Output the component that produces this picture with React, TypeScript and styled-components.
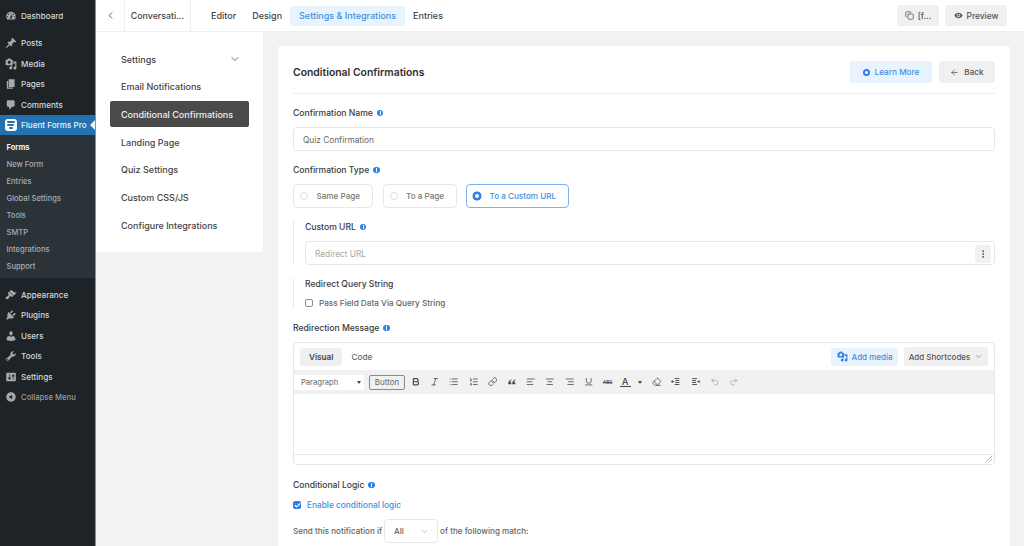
import React from "react";
import styled, { createGlobalStyle } from "styled-components";
import {
  Bold, Italic, List, ListOrdered, Link, AlignLeft, AlignCenter, AlignRight, Underline,
  Eraser, Undo2, Redo2, ChevronDown, ChevronLeft, Copy,
  ArrowLeft, Check, MoreVertical,
} from "lucide-react";

const Global = createGlobalStyle`
  html, body { margin: 0; padding: 0; height: 546px; overflow: hidden; background: #f2f2f2; }
  body { font-family: Inter, "Liberation Sans", sans-serif; -webkit-font-smoothing: antialiased; }
  * { box-sizing: border-box; }
`;

const Shell = styled.div`display: flex; width: 1024px; height: 546px; overflow: hidden;`;

const Side = styled.nav`
  width: 96px; flex: none; background: #1d2327; border-right: 1px solid #8a8f94;
  padding-top: 6px; color: #d5d8da; display: flex; flex-direction: column;
`;
const SideItem = styled.div<{ $mt?: number; $dim?: boolean }>`
  height: 20.5px; margin-top: ${p => p.$mt ?? 0}px; display: flex; align-items: center;
  gap: 4.5px; padding-left: 4.5px; font-size: ${p => (p.$dim ? 7.7 : 8.1)}px; font-weight: 500;
  color: ${p => (p.$dim ? "#9a9ea2" : "#d5d8da")}; white-space: nowrap;
  svg { width: 12px; height: 12px; fill: #a7aaad; flex: none; }
`;
const SideActive = styled.div`
  height: 20px; background: #2271b1; display: flex; align-items: center; gap: 4.5px;
  padding-left: 4.5px; font-size: 8.1px; font-weight: 500; color: #eef3f7; white-space: nowrap; position: relative;
  &::after {
    content: ""; position: absolute; right: 0; top: 5px; border: 5px solid transparent;
    border-right-color: #f2f2f2; border-left-width: 0;
  }
`;
const FluentLogo = styled.span`
  width: 12px; height: 12px; border-radius: 3px; background: #fff; display: flex; flex-direction: column;
  align-items: center; justify-content: center; gap: 1.5px; flex: none;
  i { display: block; height: 1.8px; background: #2271b1; border-radius: 1px; }
  i:nth-child(1) { width: 8px; } i:nth-child(2) { width: 7px; } i:nth-child(3) { width: 4px; }
`;
const Sub = styled.div`
  background: #2c3338; height: 143px; padding-top: 4px; display: flex; flex-direction: column;
`;
const SubItem = styled.div<{ $on?: boolean }>`
  height: 17px; display: flex; align-items: center; padding-left: 6.5px; font-size: 7.55px;
  font-weight: ${p => (p.$on ? 700 : 500)}; color: ${p => (p.$on ? "#f0f0f1" : "#a9adb1")}; white-space: nowrap;
`;

const Content = styled.div`flex: 1; min-width: 0; display: flex; flex-direction: column;`;
const TopBar = styled.header`
  height: 32px; flex: none; background: #fff; border-bottom: 1px solid #eceef0;
  display: flex; align-items: stretch; color: #444;
`;
const BackCell = styled.div`
  width: 29px; display: flex; align-items: center; justify-content: center; border-right: 1px solid #eceef0;
  svg { width: 11px; height: 11px; color: #555; }
`;
const TitleCell = styled.div`
  width: 66px; border-right: 1px solid #eceef0; display: flex; align-items: center; justify-content: center;
  font-size: 8.8px; font-weight: 500; color: #444; white-space: nowrap;
`;
const Tabs = styled.div`display: flex; align-items: center; margin-left: 12px;`;
const Tab = styled.div<{ $on?: boolean }>`
  height: 20px; padding: 0 ${p => (p.$on ? 9 : 8)}px; display: flex; align-items: center; font-size: 9px; font-weight: 500;
  border-radius: 3px; white-space: nowrap;
  color: ${p => (p.$on ? "#3f8fe0" : "#444")}; background: ${p => (p.$on ? "#e9f3fd" : "transparent")};
`;
const TopRight = styled.div`margin-left: auto; display: flex; align-items: center; gap: 6px; padding-right: 17px;`;
const GreyBtn = styled.div<{ $w: number }>`
  width: ${p => p.$w}px; height: 21px; background: #f0f0f0; border-radius: 3px; display: flex; align-items: center;
  justify-content: center; gap: 4px; font-size: 8.4px; font-weight: 500; color: #555;
  svg { width: 9px; height: 9px; }
`;

const Body = styled.div`flex: 1; min-height: 0; display: flex; align-items: flex-start; gap: 15px;`;
const Menu = styled.aside`
  width: 167px; flex: none; height: 220px; background: #fff; padding: 14px 14px 0; display: flex; flex-direction: column;
`;
const MenuItem = styled.div<{ $on?: boolean }>`
  height: 26px; margin-bottom: 1.7px; padding: 0 11px; border-radius: 2px; display: flex; align-items: center;
  justify-content: space-between; font-size: 9px; font-weight: 500; white-space: nowrap;
  background: ${p => (p.$on ? "#4a4a4a" : "transparent")}; color: ${p => (p.$on ? "#f0f0f0" : "#444")};
  svg { width: 12px; height: 12px; color: #666; margin-right: -3px; }
`;
const Card = styled.main`
  width: 732px; flex: none; margin-top: 14px; background: #fff; border-radius: 3px 3px 0 0; padding: 15px 15px 0; height: 520px;
  display: flex; flex-direction: column;
`;
const CardHead = styled.div`
  height: 33px; flex: none; border-bottom: 1px solid #eceef0; display: flex; align-items: flex-start; justify-content: space-between; padding-bottom: 10px;
`;
const CardTitle = styled.h1`margin: 4.5px 0 0; font-size: 10.4px; font-weight: 600; color: #303030; white-space: nowrap;`;
const HeadBtns = styled.div`display: flex; gap: 7px;`;
const HeadBtn = styled.div<{ $w: number; $blue?: boolean }>`
  width: ${p => p.$w}px; height: 22px; border-radius: 3px; display: flex; align-items: center; justify-content: center; gap: 5px;
  font-size: 8.2px; font-weight: 500; white-space: nowrap;
  background: ${p => (p.$blue ? "#e8f3fe" : "#f0f0f0")}; color: ${p => (p.$blue ? "#3f8fe0" : "#555")};
  svg { width: 9px; height: 9px; }
`;
const RingDot = styled.span`
  width: 7px; height: 7px; border-radius: 50%; background: #fff; border: 2.2px solid #2f80e8; flex: none;
`;
const Label = styled.div<{ $mt: number }>`
  margin-top: ${p => p.$mt}px; height: 12px; display: flex; align-items: center; gap: 4px;
  font-size: 8.6px; font-weight: 500; color: #3a3a3a; white-space: nowrap;
`;
const InfoDot = styled.span`
  width: 6.5px; height: 6.5px; border-radius: 50%; background: #2f80e8; flex: none; position: relative;
  &::after { content: ""; position: absolute; left: 2.75px; top: 1.5px; width: 1px; height: 3.5px; background: #fff; }
`;
const TextField = styled.div<{ $mt: number; $muted?: boolean }>`
  margin-top: ${p => p.$mt}px; height: 24px; border: 1px solid #e5e7ea; border-radius: 4px; padding: 1px 9px 0;
  display: flex; align-items: center; justify-content: space-between; font-size: 8.3px;
  color: ${p => (p.$muted ? "#a8a8a8" : "#666")}; background: #fff;
`;
const KebabBtn = styled.span`
  width: 16px; height: 18px; margin-right: -6px; background: #f0f0f0; border-radius: 3px; display: flex; align-items: center; justify-content: center;
  svg { width: 10px; height: 10px; color: #444; }
`;
const Radios = styled.div`margin-top: 8px; display: flex; gap: 9.5px;`;
const Radio = styled.div<{ $w: number; $on?: boolean }>`
  width: ${p => p.$w}px; height: 24px; border-radius: 4px; padding-left: 6px; display: flex; align-items: center; gap: 8.5px;
  font-size: 8.15px; font-weight: 500; white-space: nowrap;
  border: 1px solid ${p => (p.$on ? "#7fb2ea" : "#e7e8ea")}; color: ${p => (p.$on ? "#3f8fe0" : "#777")};
`;
const RadioDot = styled.span<{ $on?: boolean }>`
  width: 8px; height: 8px; border-radius: 50%; flex: none;
  ${p => p.$on ? "background: #fff; border: 2.5px solid #2f80e8; box-shadow: 0 0 0 .5px #2f80e8;" : "border: 1px solid #dedede;"}
`;
const Group = styled.section<{ $mt: number; $h: number }>`
  margin-top: ${p => p.$mt}px; height: ${p => p.$h}px; border-left: 1px solid #e9eaec; padding-left: 11px;
`;
const CheckLine = styled.div`
  margin-top: 8px; display: flex; align-items: center; gap: 6px; font-size: 8.2px; font-weight: 500; color: #666; white-space: nowrap;
`;
const CheckBox = styled.span`width: 8px; height: 8px; border: 1px solid #8e8e8e; border-radius: 2px; flex: none;`;
const Editor = styled.div`
  margin-top: 8px; height: 123px; border: 1px solid #e5e7ea; border-radius: 4px; flex: none; display: flex; flex-direction: column; background: #fff;
`;
const EdTop = styled.div`height: 27px; flex: none; display: flex; align-items: center; padding: 0 6px;`;
const EdMode = styled.div<{ $on?: boolean }>`
  height: 18px; padding: 0 9px; display: flex; align-items: center; border-radius: 3px; font-size: 8.2px;
  font-weight: ${p => (p.$on ? 600 : 500)}; background: ${p => (p.$on ? "#f0f0f0" : "transparent")}; color: ${p => (p.$on ? "#444" : "#666")};
`;
const EdSpacer = styled.div`flex: 1;`;
const AddMedia = styled.div`
  width: 67px; height: 18px; border-radius: 3px; background: #e8f3fe; color: #3f8fe0; font-size: 8px; font-weight: 500;
  display: flex; align-items: center; justify-content: center; gap: 4px; white-space: nowrap; margin-right: 6px;
  svg { width: 11px; height: 11px; fill: #2f80e8; }
`;
const Shortcodes = styled.div`
  width: 84px; height: 19px; border-radius: 3px; background: #f0f0f0; color: #555; font-size: 8px; font-weight: 500;
  display: flex; align-items: center; justify-content: center; gap: 4px; white-space: nowrap;
  svg { width: 9px; height: 9px; color: #888; }
`;
const Toolbar = styled.div`
  height: 24px; flex: none; background: #f1f1f1; display: flex; align-items: center;
  svg { width: 9.5px; height: 9.5px; color: #4a4a4a; flex: none; }
`;
const Para = styled.div`
  width: 70px; height: 15px; background: #fff; display: flex; align-items: center; justify-content: space-between;
  padding: 0 3px 0 7px; font-size: 7.6px; color: #666; flex: none;
`;
const Caret = styled.span`
  width: 0; height: 0; border: 2.2px solid transparent; border-top: 3px solid #444; border-bottom: 0; flex: none;
`;
const TinyBtn = styled.div`
  margin-left: 5px; width: 36px; height: 15px; border: 1px solid #8a8a8a; border-radius: 2px; display: flex; align-items: center; justify-content: center;
  font-size: 8px; color: #666; flex: none;
`;
const Tools = styled.div`display: flex; align-items: center; gap: 9.7px; margin-left: 6px;`;
const Abc = styled.span`font-size: 4.5px; font-weight: 600; color: #555; text-decoration: line-through; width: 10px;`;
const ColorTool = styled.span`display: flex; align-items: center; gap: 7px; margin: 0 1px 0 -3px;`;
const ColorA = styled.span`font-size: 9.5px; color: #444; font-weight: 500; border-bottom: 1.5px solid #444; line-height: 9px; width: 11px; text-align: center;`;
const Muted = styled.span`display: flex; svg { color: #aaa; }`;
const EdBody = styled.div`flex: 1;`;
const EdStatus = styled.div`
  height: 10px; flex: none; border-top: 1px solid #e5e7ea; display: flex; justify-content: flex-end; align-items: flex-end; padding: 0 2px 2px;
  svg { width: 6px; height: 6px; stroke: #999; }
`;
const BlueCheck = styled.div`
  margin-top: 9px; display: flex; align-items: center; gap: 6px; font-size: 8.3px; font-weight: 500; color: #3f8fe0; white-space: nowrap;
`;
const CheckedBox = styled.span`
  width: 8px; height: 8px; background: #2f80e8; border-radius: 2px; display: flex; align-items: center; justify-content: center; flex: none;
  svg { width: 7px; height: 7px; color: #fff; }
`;
const SendLine = styled.div`
  margin-top: 9px; display: flex; align-items: center; gap: 2px; font-size: 8.1px; font-weight: 500; color: #666; white-space: nowrap;
`;
const Select = styled.div`
  width: 54px; height: 24px; border: 1px solid #e7e8ea; border-radius: 4px; display: flex; align-items: center; justify-content: space-between; padding: 0 8px 0 9px;
  svg { width: 9px; height: 9px; color: #aaa; }
`;

const dash: Record<string, string> = {
  dashboard: "M3.76 16h12.48c1.1-1.37 1.76-3.11 1.76-5 0-4.42-3.58-8-8-8s-8 3.58-8 8c0 1.89.66 3.63 1.76 5zM10 4c.55 0 1 .45 1 1s-.45 1-1 1-1-.45-1-1 .45-1 1-1zM6 6c.55 0 1 .45 1 1s-.45 1-1 1-1-.45-1-1 .45-1 1-1zm8 0c.55 0 1 .45 1 1s-.45 1-1 1-1-.45-1-1 .45-1 1-1zm-5.37 5.55L12 7v6c0 1.1-.9 2-2 2s-2-.9-2-2c0-.57.24-1.08.63-1.45zM4 10c.55 0 1 .45 1 1s-.45 1-1 1-1-.45-1-1 .45-1 1-1zm12 0c.55 0 1 .45 1 1s-.45 1-1 1-1-.45-1-1 .45-1 1-1zm-5 3c0-.55-.45-1-1-1s-1 .45-1 1 .45 1 1 1 1-.45 1-1z",
  post: "M10.44 3.02l1.82-1.82 6.36 6.35-1.83 1.82c-1.05-.68-2.48-.57-3.41.36l-.75.75c-.92.93-1.04 2.35-.35 3.41l-1.83 1.82-2.41-2.41-2.8 2.79c-.42.42-3.38 2.71-3.8 2.29s1.86-3.39 2.28-3.81l2.79-2.79L4.1 9.36l1.83-1.82c1.05.69 2.48.57 3.4-.36l.75-.75c.93-.92 1.05-2.35.36-3.41z",
  media: "M13 11V4c0-.55-.45-1-1-1h-1.67L9 1H5L3.67 3H2c-.55 0-1 .45-1 1v7c0 .55.45 1 1 1h10c.55 0 1-.45 1-1zM7 4.5c1.38 0 2.5 1.12 2.5 2.5S8.38 9.5 7 9.5 4.5 8.38 4.5 7 5.62 4.5 7 4.5zM14 6h5v10.5c0 1.38-1.12 2.5-2.5 2.5S14 17.88 14 16.5s1.12-2.5 2.5-2.5c.17 0 .34.02.5.05V9h-3V6zm-4 8.05V13h2v3.5c0 1.38-1.12 2.5-2.5 2.5S7 17.88 7 16.5 8.12 14 9.5 14c.17 0 .34.02.5.05z",
  page: "M6 15V2h10v13H6zm-1 1h8v2H3V5h2v11z",
  comments: "M5 2h9c1.1 0 2 .9 2 2v7c0 1.1-.9 2-2 2h-2l-5 5v-5H5c-1.1 0-2-.9-2-2V4c0-1.1.9-2 2-2z",
  appearance: "M14.48 11.06L7.41 3.99l1.5-1.5c.5-.56 2.3-.47 3.51.32 1.21.8 1.43 1.28 2.91 2.1 1.18.64 2.45 1.26 4.45.85zm-.71.71L6.7 4.7 4.93 6.47c-.39.39-.39 1.02 0 1.41l1.06 1.06c.39.39.39 1.03 0 1.42-.6.6-1.43 1.11-2.21 1.69-.35.26-.7.53-1.01.84C1.43 13.23.4 14.84 1.8 16.24c1.4 1.4 3.01.37 4.35-.97.31-.31.58-.66.84-1.01.58-.78 1.09-1.61 1.69-2.21.39-.39 1.03-.39 1.42 0l1.06 1.06c.39.39 1.02.39 1.41 0z",
  plugins: "M13.11 4.36L9.87 7.6 8 5.73l3.24-3.24c.35-.34 1.05-.2 1.56.32.52.51.66 1.21.31 1.55zm-8 1.77l.91-1.12 9.01 9.01-1.19.84c-.71.71-2.63 1.16-3.82 1.16H6.14L4.9 17.26c-.59.59-1.54.59-2.12 0-.59-.58-.59-1.53 0-2.12l1.24-1.24v-3.88c0-1.13.4-3.19 1.09-3.89zm7.26 3.97l3.24-3.24c.34-.35 1.04-.21 1.55.31.52.51.66 1.21.31 1.55l-3.24 3.25z",
  users: "M10 9.25c-2.27 0-2.73-3.44-2.73-3.44C7 4.02 7.82 2 9.97 2c2.16 0 2.98 2.02 2.71 3.81 0 0-.41 3.44-2.68 3.44zm0 2.57L12.72 10c2.39 0 4.52 2.33 4.52 4.53v2.49s-3.65 1.13-7.24 1.13c-3.65 0-7.24-1.13-7.24-1.13v-2.49c0-2.25 1.94-4.48 4.47-4.48z",
  tools: "M16.68 9.77c-1.34 1.34-3.3 1.67-4.95.99l-5.41 6.52c-.99.99-2.59.99-3.58 0s-.99-2.59 0-3.57l6.52-5.42c-.68-1.65-.35-3.61.99-4.95 1.28-1.28 3.12-1.62 4.72-1.06l-2.89 2.89 2.82 2.82 2.86-2.87c.53 1.58.18 3.39-1.08 4.65zM3.81 16.21c.4.39 1.04.39 1.43 0 .4-.4.4-1.04 0-1.43-.39-.4-1.03-.4-1.43 0-.39.39-.39 1.03 0 1.43z",
  settings: "M18 16V4c0-.55-.45-1-1-1H3c-.55 0-1 .45-1 1v12c0 .55.45 1 1 1h14c.55 0 1-.45 1-1zM8 11h1c.55 0 1 .45 1 1s-.45 1-1 1H8v1.5c0 .28-.22.5-.5.5s-.5-.22-.5-.5V13H6c-.55 0-1-.45-1-1s.45-1 1-1h1V5.5c0-.28.22-.5.5-.5s.5.22.5.5V11zm5-2h-1c-.55 0-1-.45-1-1s.45-1 1-1h1V5.5c0-.28.22-.5.5-.5s.5.22.5.5V7h1c.55 0 1 .45 1 1s-.45 1-1 1h-1v5.5c0 .28-.22.5-.5.5s-.5-.22-.5-.5V9z",
  collapse: "M10 2.16c4.33 0 7.84 3.51 7.84 7.84s-3.51 7.84-7.84 7.84S2.16 14.33 2.16 10 5.71 2.16 10 2.16zm2 11.72V6.12L6.18 9.97z",
};
const Dash = ({ n }: { n: string }) => <svg viewBox="0 0 20 20"><path d={dash[n]} /></svg>;

const QuoteIcon = () => (
  <svg viewBox="0 0 24 24" fill="currentColor" stroke="none">
    <path d="M3 18c0-6 2-10 8-12v3c-2 1-3 2-3 4h3v5H3zM13 18c0-6 2-10 8-12v3c-2 1-3 2-3 4h3v5h-8z" />
  </svg>
);
const PreviewEye = () => (
  <svg viewBox="0 0 20 20" fill="currentColor">
    <path d="M10 4C5.5 4 2 7.5 1 10c1 2.500 4.500 6 9 6s8-3.500 9-6c-1-2.500-4.500-6-9-6zm0 10a4 4 0 1 1 0-8 4 4 0 0 1 0 8zm0-6.200a2.200 2.200 0 1 0 0 4.400 2.200 2.200 0 0 0 0-4.400z" />
  </svg>
);
const OutdentIcon = () => (
  <svg viewBox="0 0 24 24" fill="none" stroke="currentColor" strokeWidth="2.4">
    <path d="M9 4h12M11 9h10M11 14h10M9 19h12M1 11.500h7M4 8.500l-3 3 3 3" />
  </svg>
);
const IndentIcon = () => (
  <svg viewBox="0 0 24 24" fill="none" stroke="currentColor" strokeWidth="2.4">
    <path d="M3 4h12M3 9h10M3 14h10M3 19h12M16 11.500h7M20 8.500l3 3-3 3" />
  </svg>
);

export default function App() {
  return (
    <Shell>
      <Global />
      <Side>
        <SideItem><Dash n="dashboard" />Dashboard</SideItem>
        <SideItem $mt={6.5}><Dash n="post" />Posts</SideItem>
        <SideItem><Dash n="media" />Media</SideItem>
        <SideItem><Dash n="page" />Pages</SideItem>
        <SideItem><Dash n="comments" />Comments</SideItem>
        <SideActive><FluentLogo><i /><i /><i /></FluentLogo>Fluent Forms Pro</SideActive>
        <Sub>
          <SubItem $on>Forms</SubItem>
          <SubItem>New Form</SubItem>
          <SubItem>Entries</SubItem>
          <SubItem>Global Settings</SubItem>
          <SubItem>Tools</SubItem>
          <SubItem>SMTP</SubItem>
          <SubItem>Integrations</SubItem>
          <SubItem>Support</SubItem>
        </Sub>
        <SideItem $mt={6.5}><Dash n="appearance" />Appearance</SideItem>
        <SideItem><Dash n="plugins" />Plugins</SideItem>
        <SideItem><Dash n="users" />Users</SideItem>
        <SideItem><Dash n="tools" />Tools</SideItem>
        <SideItem><Dash n="settings" />Settings</SideItem>
        <SideItem $dim><Dash n="collapse" />Collapse Menu</SideItem>
      </Side>
      <Content>
        <TopBar>
          <BackCell><ChevronLeft /></BackCell>
          <TitleCell>Conversati...</TitleCell>
          <Tabs>
            <Tab>Editor</Tab>
            <Tab>Design</Tab>
            <Tab $on>Settings &amp; Integrations</Tab>
            <Tab>Entries</Tab>
          </Tabs>
          <TopRight>
            <GreyBtn $w={42}><Copy />[f...</GreyBtn>
            <GreyBtn $w={62}><PreviewEye />Preview</GreyBtn>
          </TopRight>
        </TopBar>
        <Body>
          <Menu>
            <MenuItem>Settings<ChevronDown /></MenuItem>
            <MenuItem>Email Notifications</MenuItem>
            <MenuItem $on>Conditional Confirmations</MenuItem>
            <MenuItem>Landing Page</MenuItem>
            <MenuItem>Quiz Settings</MenuItem>
            <MenuItem>Custom CSS/JS</MenuItem>
            <MenuItem>Configure Integrations</MenuItem>
          </Menu>
          <Card>
            <CardHead>
              <CardTitle>Conditional Confirmations</CardTitle>
              <HeadBtns>
                <HeadBtn $w={82} $blue><RingDot />Learn More</HeadBtn>
                <HeadBtn $w={56}><ArrowLeft />Back</HeadBtn>
              </HeadBtns>
            </CardHead>
            <Label $mt={13}>Confirmation Name <InfoDot /></Label>
            <TextField $mt={8}>Quiz Confirmation</TextField>
            <Label $mt={13}>Confirmation Type <InfoDot /></Label>
            <Radios>
              <Radio $w={80}><RadioDot />Same Page</Radio>
              <Radio $w={74}><RadioDot />To a Page</Radio>
              <Radio $w={103} $on><RadioDot $on />To a Custom URL</Radio>
            </Radios>
            <Group $mt={13} $h={44}>
              <Label $mt={0}>Custom URL <InfoDot /></Label>
              <TextField $mt={8} $muted>Redirect URL<KebabBtn><MoreVertical /></KebabBtn></TextField>
            </Group>
            <Group $mt={13} $h={30}>
              <Label $mt={0}>Redirect Query String</Label>
              <CheckLine><CheckBox />Pass Field Data Via Query String</CheckLine>
            </Group>
            <Label $mt={14}>Redirection Message <InfoDot /></Label>
            <Editor>
              <EdTop>
                <EdMode $on>Visual</EdMode>
                <EdMode>Code</EdMode>
                <EdSpacer />
                <AddMedia><Dash n="media" />Add media</AddMedia>
                <Shortcodes>Add Shortcodes <ChevronDown /></Shortcodes>
              </EdTop>
              <Toolbar>
                <Para>Paragraph<Caret /></Para>
                <TinyBtn>Button</TinyBtn>
                <Tools>
                  <Bold strokeWidth={3} /><Italic /><List /><ListOrdered /><Link /><QuoteIcon />
                  <AlignLeft /><AlignCenter /><AlignRight /><Underline /><Abc>ABC</Abc>
                  <ColorTool><ColorA>A</ColorA><Caret /></ColorTool>
                  <Eraser /><OutdentIcon /><IndentIcon />
                  <Muted><Undo2 /></Muted><Muted><Redo2 /></Muted>
                </Tools>
              </Toolbar>
              <EdBody />
              <EdStatus>
                <svg viewBox="0 0 6 6"><path d="M6 0L0 6M6 3L3 6" strokeWidth=".7" /></svg>
              </EdStatus>
            </Editor>
            <Label $mt={14}>Conditional Logic <InfoDot /></Label>
            <BlueCheck><CheckedBox><Check strokeWidth={4} /></CheckedBox>Enable conditional logic</BlueCheck>
            <SendLine>Send this notification if <Select>All<ChevronDown /></Select> of the following match:</SendLine>
          </Card>
        </Body>
      </Content>
    </Shell>
  );
}
